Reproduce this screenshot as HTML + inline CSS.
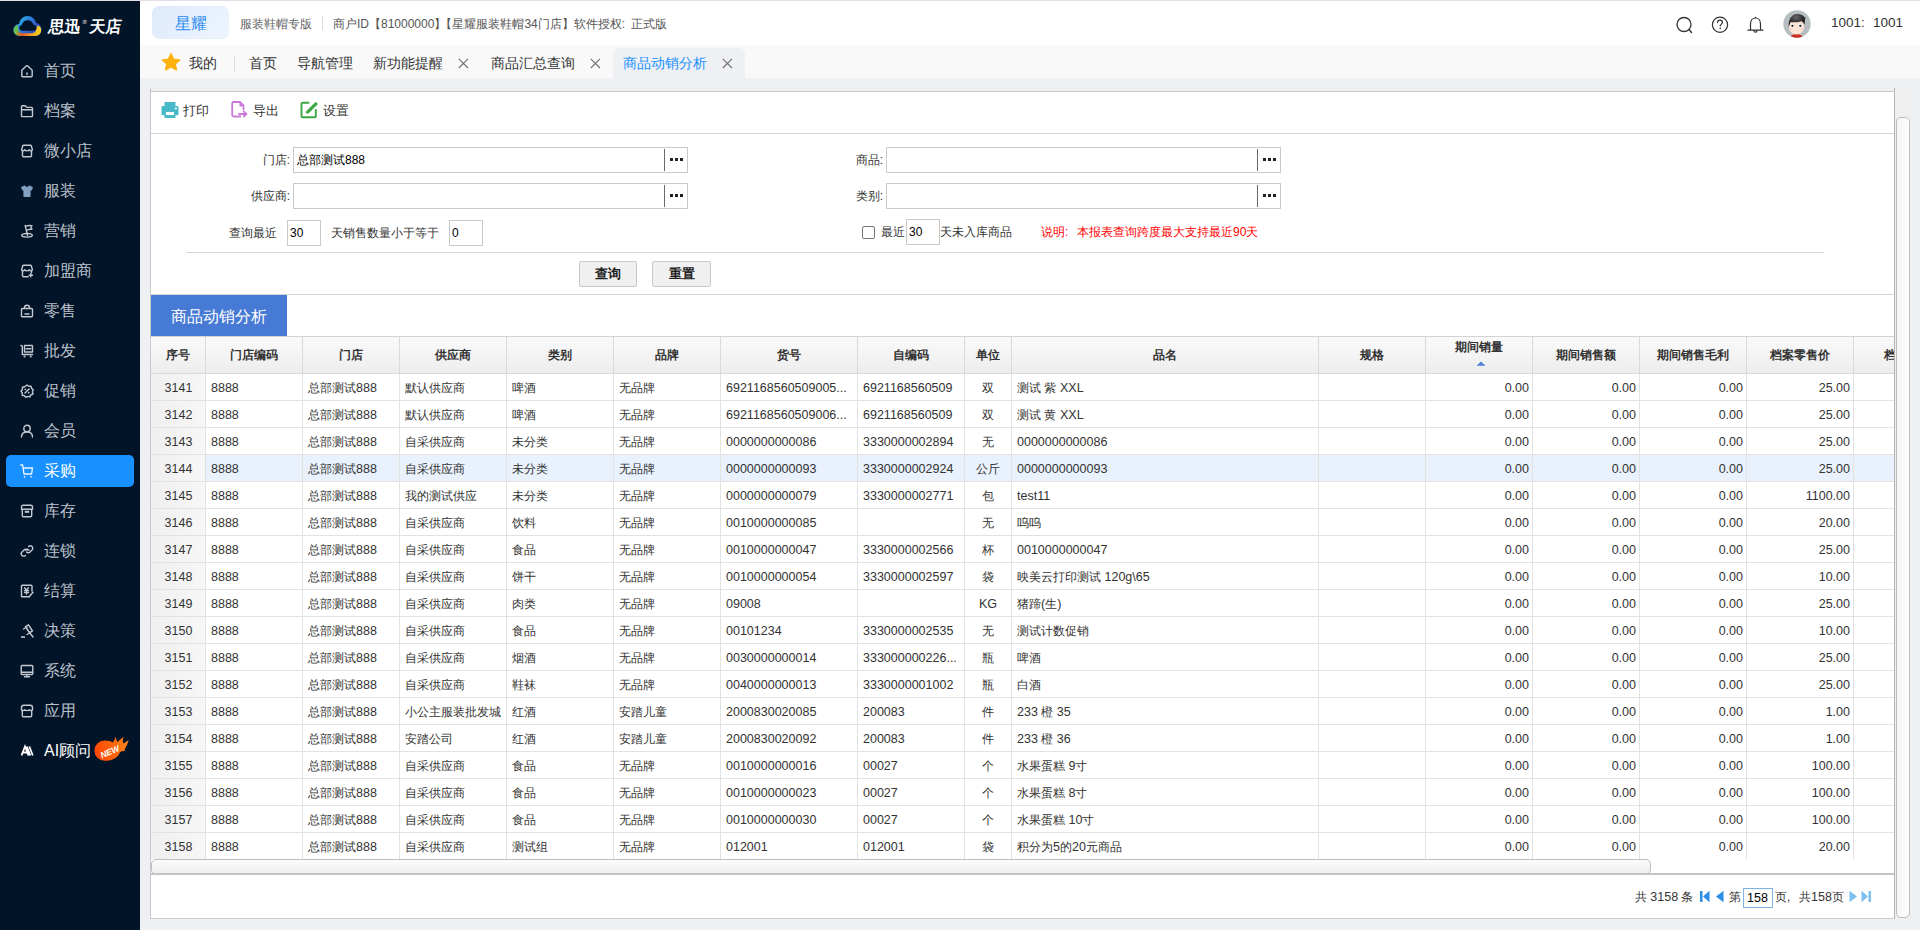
<!DOCTYPE html><html><head><meta charset="utf-8"><style>
*{box-sizing:border-box;margin:0;padding:0}
html,body{width:1920px;height:930px;overflow:hidden;background:#eff0f4;font-family:"Liberation Sans",sans-serif;color:#333;font-size:12px}
.a{position:absolute;white-space:nowrap}
#topline{position:absolute;left:0;top:0;width:1920px;height:1px;background:#e3dde9;z-index:5}
#side{position:absolute;left:0;top:0;width:140px;height:930px;background:#021428}
#hdr{position:absolute;left:140px;top:0;width:1780px;height:45px;background:#fff}
#tabs{position:absolute;left:140px;top:45px;width:1780px;height:33px;background:#f9f9fa}
#panel{position:absolute;left:150px;top:91px;width:1745px;height:828px;background:#fff;border:1px solid #c9c9c9;border-right-color:#b4b4b4}
#vtrack{position:absolute;left:1895px;top:88px;width:15px;height:831px;background:#efefef}
#vthumb{position:absolute;left:1896px;top:117px;width:14px;height:801px;border:1px solid #bdbdbd;border-radius:5px;background:linear-gradient(to right,#f6f6f6,#fdfdfd)}
#ptopstrip{position:absolute;left:150px;top:88px;width:1745px;height:3px;background:#efefef}
.si{position:absolute;left:0;width:140px;height:32px}
.si svg{position:absolute;left:20px;top:9px}
.si span{position:absolute;left:44px;top:5px;font-size:16px;line-height:22px;color:#bcc1cb;font-weight:500}
.si.act{left:6px;width:128px;background:#1890ff;border-radius:5px}
.si.act svg{left:14px}
.si.act span{left:38px;color:#fff}
.tb{position:absolute;top:53px;font-size:14px;line-height:20px;color:#333}
.tx{position:absolute;top:58px}
</style></head><body><div id="topline"></div>
<div id="side">
<svg class="a" style="left:13px;top:15px" width="29" height="22" viewBox="0 0 29 22">
<defs><linearGradient id="lg1" x1="0" y1="0" x2="1" y2="0.6"><stop offset="0" stop-color="#35c0d8"/><stop offset=".4" stop-color="#2a8fe0"/><stop offset=".75" stop-color="#3457c8"/><stop offset="1" stop-color="#3346b8"/></linearGradient>
<linearGradient id="lg2" x1="0" y1="0" x2="1" y2="0"><stop offset="0" stop-color="#6cc84a"/><stop offset=".3" stop-color="#e8572a"/><stop offset=".6" stop-color="#f39a1e"/><stop offset="1" stop-color="#f5d523"/></linearGradient></defs>
<path d="M7 21 C3 21 0.5 18.5 0.5 15 C0.5 11.8 2.8 9.3 6 9 C6.8 4.2 10.5 1 14.5 1 C18.8 1 22 3.8 23 7.8 C26 8.5 28.5 11.2 28.5 14.5 C28.5 18.2 25.8 21 22 21 Z" fill="url(#lg1)"/>
<path d="M0.8 15.5 C0.8 18.6 3.3 20.9 7 20.9 H22 C25.5 20.9 28.2 18.5 28.2 15 C28 12.8 26.8 11.2 25 10.6 C24.5 10.8 24 11.5 23.5 12.5 C23.5 16 21.5 18.2 19 18.2 H9.5 C7 18.2 5.4 16.8 5.2 14.5 L4.5 10.3 C2.2 11 0.8 13 0.8 15.5 Z" fill="url(#lg2)"/>
<path d="M0.8 15.5 C0.8 13 2.2 11 4.5 10.3 L5.4 14.8 C4.5 17 3 19 2.2 19 C1.3 18 0.8 16.8 0.8 15.5 Z" fill="#5fc44c" opacity=".85"/>
<path d="M9.5 15.7 C7.5 15.7 6.3 14.5 6.3 13 C6.3 11.4 7.4 10.3 9 10.1 C9.5 7.2 11.8 5.3 14.6 5.3 C17.6 5.3 19.8 7.3 20.3 9.8 C22.2 10 23.5 11.3 23.5 12.9 C23.5 14.5 22.2 15.7 20.5 15.7 Z" fill="#021428"/>
</svg>
<div class="a" style="left:48px;top:17px;font-size:16px;line-height:19px;color:#fff;font-weight:bold;transform:skewX(-6deg);transform-origin:0 100%">思迅<span style="font-size:6px;vertical-align:top;position:relative;top:-4px;margin:0 3px 0 1px;color:#ccc">®</span>天店</div>
<div class="si" style="top:55px"><svg width="14" height="14" viewBox="0 0 14 14"><path d="M1.8 6.2 L6.2 2 C6.7 1.6 7.3 1.6 7.8 2 L12.2 6.2 V11.8 C12.2 12.4 11.8 12.8 11.2 12.8 H2.8 C2.2 12.8 1.8 12.4 1.8 11.8 Z" fill="none" stroke="#c4c9d1" stroke-width="1.4" stroke-linecap="round" stroke-linejoin="round"/><path d="M7 9 V10.6" fill="none" stroke="#c4c9d1" stroke-width="1.4" stroke-linecap="round" stroke-linejoin="round"/></svg><span>首页</span></div>
<div class="si" style="top:95px"><svg width="14" height="14" viewBox="0 0 14 14"><path d="M1.5 2.5 C1.5 2 1.8 1.7 2.3 1.7 H5.3 L6.8 3.4 H11.7 C12.2 3.4 12.5 3.7 12.5 4.2 V11.8 C12.5 12.3 12.2 12.6 11.7 12.6 H2.3 C1.8 12.6 1.5 12.3 1.5 11.8 Z M1.5 5.8 H12.5" fill="none" stroke="#c4c9d1" stroke-width="1.4" stroke-linecap="round" stroke-linejoin="round"/></svg><span>档案</span></div>
<div class="si" style="top:135px"><svg width="14" height="14" viewBox="0 0 14 14"><path d="M2.5 6.5 V11.8 C2.5 12.4 2.9 12.8 3.5 12.8 H10.5 C11.1 12.8 11.5 12.4 11.5 11.8 V6.5" fill="none" stroke="#c4c9d1" stroke-width="1.4" stroke-linecap="round" stroke-linejoin="round"/><path d="M1.6 5.6 L2.6 2.2 C2.8 1.6 3.2 1.2 3.8 1.2 H10.2 C10.8 1.2 11.2 1.6 11.4 2.2 L12.4 5.6 C12.4 6.4 11.8 6.9 11 6.9 C10.2 6.9 9.7 6.3 9.3 5.8 C8.8 6.4 8 6.9 7 6.9 C6 6.9 5.2 6.4 4.7 5.8 C4.3 6.3 3.8 6.9 3 6.9 C2.2 6.9 1.6 6.4 1.6 5.6 Z" fill="none" stroke="#c4c9d1" stroke-width="1.4" stroke-linecap="round" stroke-linejoin="round"/></svg><span>微小店</span></div>
<div class="si" style="top:175px"><svg width="14" height="14" viewBox="0 0 14 14"><path d="M4.8 1.2 L1 3.2 L2.2 6.6 L3.4 6.2 V12.2 C3.4 12.6 3.7 12.9 4.1 12.9 H9.9 C10.3 12.9 10.6 12.6 10.6 12.2 V6.2 L11.8 6.6 L13 3.2 L9.2 1.2 C8.8 2.3 7.8 2.8 7 2.8 C6.2 2.8 5.2 2.3 4.8 1.2 Z" fill="#809fc1"/></svg><span>服装</span></div>
<div class="si" style="top:215px"><svg width="14" height="14" viewBox="0 0 14 14"><ellipse cx="7" cy="11.3" rx="5.3" ry="1.8" fill="none" stroke="#c4c9d1" stroke-width="1.4" stroke-linecap="round" stroke-linejoin="round"/><path d="M7.5 11.3 L5.2 1.5 C7 2.7 8.5 0.8 12 1.8 C10.5 3 10.8 4.5 12 5 C9 5 7.5 6.6 6.2 5.8" fill="none" stroke="#c4c9d1" stroke-width="1.4" stroke-linecap="round" stroke-linejoin="round"/></svg><span>营销</span></div>
<div class="si" style="top:255px"><svg width="14" height="14" viewBox="0 0 14 14"><path d="M2.5 6.5 V11.8 C2.5 12.4 2.9 12.8 3.5 12.8 H8.2 M11.5 6.5 V8.5" fill="none" stroke="#c4c9d1" stroke-width="1.4" stroke-linecap="round" stroke-linejoin="round"/><path d="M1.6 5.6 L2.6 2.2 C2.8 1.6 3.2 1.2 3.8 1.2 H10.2 C10.8 1.2 11.2 1.6 11.4 2.2 L12.4 5.6 C12.4 6.4 11.8 6.9 11 6.9 C10.2 6.9 9.7 6.3 9.3 5.8 C8.8 6.4 8 6.9 7 6.9 C6 6.9 5.2 6.4 4.7 5.8 C4.3 6.3 3.8 6.9 3 6.9 C2.2 6.9 1.6 6.4 1.6 5.6 Z M10.8 9.5 V12.8 M9.2 11.2 H12.5" fill="none" stroke="#c4c9d1" stroke-width="1.4" stroke-linecap="round" stroke-linejoin="round"/></svg><span>加盟商</span></div>
<div class="si" style="top:295px"><svg width="14" height="14" viewBox="0 0 14 14"><path d="M1.5 5.5 C1.5 4.9 1.9 4.5 2.5 4.5 H11.5 C12.1 4.5 12.5 4.9 12.5 5.5 V11.8 C12.5 12.4 12.1 12.8 11.5 12.8 H2.5 C1.9 12.8 1.5 12.4 1.5 11.8 Z M4.5 4.5 V3.5 C4.5 2 5.5 1.2 7 1.2 C8.5 1.2 9.5 2 9.5 3.5 V4.5 M5 10 H9" fill="none" stroke="#c4c9d1" stroke-width="1.4" stroke-linecap="round" stroke-linejoin="round"/></svg><span>零售</span></div>
<div class="si" style="top:335px"><svg width="14" height="14" viewBox="0 0 14 14"><path d="M1 1.5 C1.8 1.5 2.3 2 2.3 2.8 V10.5 H12.5 M4.5 1.5 H11.8 C12.2 1.5 12.5 1.8 12.5 2.2 V8 H4.5 Z M6.2 4.8 H10.8" fill="none" stroke="#c4c9d1" stroke-width="1.4" stroke-linecap="round" stroke-linejoin="round"/><circle cx="4.5" cy="12.4" r="1" fill="#c4c9d1"/><circle cx="10.8" cy="12.4" r="1" fill="#c4c9d1"/></svg><span>批发</span></div>
<div class="si" style="top:375px"><svg width="14" height="14" viewBox="0 0 14 14"><path d="M7 1 L8.8 2.3 L11 2.2 L11.6 4.4 L13.3 5.8 L12.4 7.8 L13 10 L10.9 10.9 L9.9 12.9 L7.7 12.4 L5.8 13.4 L4.4 11.7 L2.2 11.2 L2.3 9 L1 7.2 L2.4 5.5 L2.4 3.3 L4.6 2.8 Z" fill="none" stroke="#c4c9d1" stroke-width="1.4" stroke-linecap="round" stroke-linejoin="round"/><path d="M5 9 L9 5" fill="none" stroke="#c4c9d1" stroke-width="1.4" stroke-linecap="round" stroke-linejoin="round"/><circle cx="5.3" cy="5.3" r=".9" fill="#c4c9d1"/><circle cx="8.7" cy="8.7" r=".9" fill="#c4c9d1"/></svg><span>促销</span></div>
<div class="si" style="top:415px"><svg width="14" height="14" viewBox="0 0 14 14"><circle cx="7" cy="4.5" r="3.2" fill="none" stroke="#c4c9d1" stroke-width="1.4" stroke-linecap="round" stroke-linejoin="round"/><path d="M1.5 13 C1.5 9.5 4 8 7 8 C10 8 12.5 9.5 12.5 13" fill="none" stroke="#c4c9d1" stroke-width="1.4" stroke-linecap="round" stroke-linejoin="round"/></svg><span>会员</span></div>
<div class="si act" style="top:455px"><svg width="14" height="14" viewBox="0 0 14 14"><path d="M0.8 1 H2.6 L4 10 H11.5 L12.5 4 H3.2 M4.5 12.5 V13 M11 12.5 V13" fill="none" stroke="#e9f3ff" stroke-width="1.4" stroke-linecap="round" stroke-linejoin="round"/></svg><span>采购</span></div>
<div class="si" style="top:495px"><svg width="14" height="14" viewBox="0 0 14 14"><path d="M1.5 3 C1.5 2 2.2 1.3 3.2 1.3 H10.8 C11.8 1.3 12.5 2 12.5 3 V5.3 H1.5 Z M2.3 5.3 V11.8 C2.3 12.4 2.7 12.8 3.3 12.8 H10.7 C11.3 12.8 11.7 12.4 11.7 11.8 V5.3" fill="none" stroke="#c4c9d1" stroke-width="1.4" stroke-linecap="round" stroke-linejoin="round"/><path d="M4.8 7.8 H9.2" stroke="#c4c9d1" stroke-width="2"/></svg><span>库存</span></div>
<div class="si" style="top:535px"><svg width="14" height="14" viewBox="0 0 14 14"><path d="M8.6 2.6 C9.6 1.6 11 1.6 12 2.6 C13 3.6 13 5 12 6 L10 8 C9 9 7.6 9 6.6 8 M5.4 6 C6.4 5 7.8 5 8.8 6 M5.4 11.4 C4.4 12.4 3 12.4 2 11.4 C1 10.4 1 9 2 8 L4 6 C5 5 6.4 5 7.4 6" fill="none" stroke="#c4c9d1" stroke-width="1.4" stroke-linecap="round" stroke-linejoin="round"/></svg><span>连锁</span></div>
<div class="si" style="top:575px"><svg width="14" height="14" viewBox="0 0 14 14"><path d="M9.5 12.7 H2.3 C1.8 12.7 1.5 12.4 1.5 11.9 V2.1 C1.5 1.6 1.8 1.3 2.3 1.3 H11.2 C11.7 1.3 12 1.6 12 2.1 V7 M4.6 3.8 L6.5 6.2 L8.4 3.8 M6.5 6.2 V10 M4.5 6.8 H8.5 M4.5 8.6 H8.5 M13 8.2 L9.2 12.8" fill="none" stroke="#c4c9d1" stroke-width="1.4" stroke-linecap="round" stroke-linejoin="round"/></svg><span>结算</span></div>
<div class="si" style="top:615px"><svg width="14" height="14" viewBox="0 0 14 14"><path d="M5.5 2.5 L8.5 0.8 L12.5 7 L9.5 8.7 Z M7.2 5.5 L13 13" fill="none" stroke="#c4c9d1" stroke-width="1.4" stroke-linecap="round" stroke-linejoin="round"/><path d="M1 13 H5" stroke="#c4c9d1" stroke-width="1.6"/><path d="M3.5 5 L7 3 M7 10.5 L10.5 8.5" fill="none" stroke="#c4c9d1" stroke-width="1.4" stroke-linecap="round" stroke-linejoin="round"/></svg><span>决策</span></div>
<div class="si" style="top:655px"><svg width="14" height="14" viewBox="0 0 14 14"><path d="M1.2 2.5 C1.2 1.9 1.6 1.5 2.2 1.5 H11.8 C12.4 1.5 12.8 1.9 12.8 2.5 V9.5 C12.8 10.1 12.4 10.5 11.8 10.5 H2.2 C1.6 10.5 1.2 10.1 1.2 9.5 Z M1.2 8.3 H12.8 M7 10.5 V12.5 M4.5 12.7 H9.5" fill="none" stroke="#c4c9d1" stroke-width="1.4" stroke-linecap="round" stroke-linejoin="round"/></svg><span>系统</span></div>
<div class="si" style="top:695px"><svg width="14" height="14" viewBox="0 0 14 14"><path d="M2.3 6.5 V11.8 C2.3 12.4 2.7 12.8 3.3 12.8 H10.7 C11.3 12.8 11.7 12.4 11.7 11.8 V6.5" fill="none" stroke="#c4c9d1" stroke-width="1.4" stroke-linecap="round" stroke-linejoin="round"/><path d="M1.5 5.8 V3.5 C1.5 2.2 2.3 1.3 3.8 1.3 H10.2 C11.7 1.3 12.5 2.2 12.5 3.5 V5.8 C11.5 6.9 10.3 6.9 9.3 5.8 C8.3 6.9 5.7 6.9 4.7 5.8 C3.7 6.9 2.5 6.9 1.5 5.8 Z" fill="none" stroke="#c4c9d1" stroke-width="1.4" stroke-linecap="round" stroke-linejoin="round"/></svg><span>应用</span></div>
<div class="si" style="top:735px"><svg width="14" height="14" viewBox="0 0 14 14"><path d="M1.5 11.5 L5 2.5 L8.5 11.5 M3.2 8.5 H6.8 M6.8 2.5 L10.3 11.5 M9.3 2.5 L12.8 11.5" fill="none" stroke="#fff" stroke-width="1.8" stroke-linecap="butt" stroke-linejoin="miter"/></svg><span style="color:#fff">AI顾问</span></div>
<svg class="a" style="left:94px;top:735px" width="36" height="28" viewBox="0 0 36 28">
<defs><linearGradient id="ng" x1="0" y1="0.3" x2="1" y2="0.1"><stop offset="0" stop-color="#ff4a06"/><stop offset=".6" stop-color="#ff6a0c"/><stop offset="1" stop-color="#ff8c1c"/></linearGradient></defs>
<path d="M10.5 5.6 C14.5 5.6 17 6.3 19 7.6 C20 5.8 21 3.5 22 1.8 C22 4 22.3 6 23.8 7 C25.5 5 27.5 3 29.7 2 C28.5 4.5 28.3 7 29.8 8.5 C31.5 7.5 33 6 34.8 5 C33.5 8 32.8 11 31.3 13 C30.5 14.3 30.8 15.5 31 16.3 C29 15.8 27.5 16.3 25.8 17.5 C24 22.5 19 25.8 10.5 25.8 A10.1 10.1 0 0 1 10.5 5.6 Z" fill="url(#ng)"/>
<text x="5.5" y="20" transform="rotate(-24 15 16)" font-family="Liberation Sans" font-weight="bold" font-style="italic" font-size="8.6" fill="#fff">NEW</text>
</svg>
</div>
<div id="hdr"></div>
<div class="a" style="left:152px;top:6px;width:77px;height:32px;border-radius:7px;background:linear-gradient(135deg,#dde9fb,#eef5ff);box-shadow:0 1px 1px rgba(150,180,230,.25)"></div>
<div class="a" style="left:175px;top:14px;font-size:16px;line-height:20px;color:#2d8cf0">星耀</div>
<div class="a" style="left:240px;top:16px;font-size:12px;line-height:17px;color:#666">服装鞋帽专版</div>
<div class="a" style="left:322px;top:16px;width:1px;height:14px;background:#ddd"></div>
<div class="a" style="left:333px;top:16px;font-size:12px;line-height:17px;color:#555">商户ID【81000000】<span style="margin-left:-6px">【</span>星耀服装鞋帽34门店】软件授权<span style="display:inline-block;width:9px">:</span>正式版</div>
<svg class="a" style="left:1674px;top:14px" width="22" height="22" viewBox="0 0 22 22">
<circle cx="10" cy="10.5" r="7" fill="none" stroke="#333" stroke-width="1.3"/><path d="M15 15.5 L17.5 18.5" stroke="#333" stroke-width="1.4" stroke-linecap="round"/></svg>
<svg class="a" style="left:1710px;top:14px" width="22" height="22" viewBox="0 0 22 22">
<circle cx="10" cy="10.8" r="7.6" fill="none" stroke="#333" stroke-width="1.2"/><path d="M7.6 8.6 C7.6 7 8.7 6.2 10 6.2 C11.4 6.2 12.4 7.1 12.4 8.4 C12.4 10 10.2 10.2 10.2 12" fill="none" stroke="#333" stroke-width="1.2" stroke-linecap="round"/><circle cx="10.2" cy="14.4" r=".8" fill="#333"/></svg>
<svg class="a" style="left:1745px;top:14px" width="22" height="22" viewBox="0 0 22 22">
<path d="M5.5 16 V10 C5.5 6.5 7.5 4 10.5 4 C13.5 4 15.5 6.5 15.5 10 V16 M3 16.2 H18 M9 17 C9 18.5 12 18.5 12 17" fill="none" stroke="#333" stroke-width="1.2" stroke-linecap="round"/><path d="M10.5 2.8 V4" stroke="#333" stroke-width="1.2"/></svg>
<svg class="a" style="left:1783px;top:10px" width="28" height="28" viewBox="0 0 28 28">
<defs><clipPath id="avc"><circle cx="14" cy="14" r="13.7"/></clipPath><radialGradient id="hair" cx=".45" cy=".25" r=".6"><stop offset="0" stop-color="#666"/><stop offset="1" stop-color="#151515"/></radialGradient></defs>
<g clip-path="url(#avc)"><rect width="28" height="28" fill="#b6bec1"/>
<path d="M7 28 C8 25 10.5 24 13.5 24 C16.5 24 19 25 20 28 Z" fill="#d02a22"/>
<ellipse cx="13.5" cy="17.3" rx="7.6" ry="7.2" fill="#fbe4d6"/>
<path d="M5.8 17.5 C5 9.5 8.5 4 14 4 C18 4 20.5 5.5 21.5 7.5 L22.5 7 C22 9 21.8 11 21.5 14.5 C20.5 12.5 19.5 11.5 18.5 11 C17 12.5 11 12.5 7.5 12 C6.8 13.5 6.2 15.5 5.8 17.5 Z" fill="url(#hair)"/>
<circle cx="9.3" cy="15.8" r="1.7" fill="#fff"/><circle cx="17.4" cy="15.8" r="1.7" fill="#fff"/>
<circle cx="9.4" cy="15.8" r="1.15" fill="#1a1a1a"/><circle cx="17.3" cy="15.8" r="1.15" fill="#1a1a1a"/>
<ellipse cx="7.8" cy="19" rx="1.3" ry=".8" fill="#f6c9c0"/><ellipse cx="19" cy="19" rx="1.3" ry=".8" fill="#f6c9c0"/></g></svg>
<div class="a" style="left:1831px;top:14px;font-size:13.5px;line-height:18px;color:#333">1001<span style="display:inline-block;width:12px">:</span>1001</div>
<div id="tabs"></div>
<svg class="a" style="left:161px;top:53px" width="20" height="19" viewBox="0 0 20 19"><path d="M10 0.8 L12.6 6.2 L18.6 6.9 L14.2 11 L15.4 16.9 L10 14 L4.6 16.9 L5.8 11 L1.4 6.9 L7.4 6.2 Z" fill="#ffb20f" stroke="#ffb20f" stroke-width="1.4" stroke-linejoin="round"/></svg>
<div class="tb" style="left:189px">我的</div>
<div class="a" style="left:234px;top:56px;width:1px;height:16px;background:#ddd"></div>
<div class="tb" style="left:249px">首页</div>
<div class="tb" style="left:297px">导航管理</div>
<div class="tb" style="left:373px">新功能提醒</div>
<div class="tx" style="left:458px"><svg width="11" height="11" viewBox="0 0 11 11"><path d="M0.8 0.8 L10 10 M10 0.8 L0.8 10" stroke="#707070" stroke-width="1.1"/></svg></div>
<div class="tb" style="left:491px">商品汇总查询</div>
<div class="tx" style="left:590px"><svg width="11" height="11" viewBox="0 0 11 11"><path d="M0.8 0.8 L10 10 M10 0.8 L0.8 10" stroke="#707070" stroke-width="1.1"/></svg></div>
<div class="a" style="left:613px;top:48px;width:132px;height:30px;background:#eff0f4;border-radius:6px 6px 0 0"></div>
<div class="tb" style="left:623px;color:#1890ff">商品动销分析</div>
<div class="tx" style="left:722px"><svg width="11" height="11" viewBox="0 0 11 11"><path d="M0.8 0.8 L10 10 M10 0.8 L0.8 10" stroke="#707070" stroke-width="1.1"/></svg></div>
<div id="ptopstrip"></div>
<div id="panel"></div>
<div class="a" style="left:151px;top:133px;width:1743px;height:1px;background:#d4d4d4"></div>
<svg class="a" style="left:161px;top:101px" width="18" height="18" viewBox="0 0 18 18">
<path d="M3.5 1 H14.5 V5 H3.5 Z" fill="#4ab9c9"/><path d="M2 5 H16 C17 5 17.5 5.6 17.5 6.5 V13 C17.5 13.8 17 14.2 16 14.2 H14.5 V17 H3.5 V14.2 H2 C1 14.2 0.5 13.8 0.5 13 V6.5 C0.5 5.6 1 5 2 5 Z" fill="#4ab9c9"/>
<rect x="5" y="11" width="8" height="3" fill="#fff"/><rect x="13.8" y="6.6" width="2" height="1.6" fill="#fff"/></svg>
<div class="a" style="left:183px;top:102px;font-size:13px;line-height:18px;color:#333">打印</div>
<svg class="a" style="left:231px;top:101px" width="18" height="18" viewBox="0 0 18 18">
<path d="M10 15.5 H2.5 C1.8 15.5 1.2 15 1.2 14.3 V2.2 C1.2 1.5 1.8 1 2.5 1 H9 L12.5 4.5 V9" fill="none" stroke="#c97ad9" stroke-width="1.8" stroke-linejoin="round"/>
<path d="M8.5 1 L13 5.5 H8.5 Z" fill="#c97ad9"/><path d="M8 13 H15 M12.8 10.5 L15.5 13 L12.8 15.5" fill="none" stroke="#c97ad9" stroke-width="1.8" stroke-linecap="round" stroke-linejoin="round"/></svg>
<div class="a" style="left:253px;top:102px;font-size:13px;line-height:18px;color:#333">导出</div>
<svg class="a" style="left:300px;top:101px" width="18" height="18" viewBox="0 0 18 18">
<path d="M8.5 1.8 H2.5 C1.9 1.8 1.5 2.2 1.5 2.8 V15.2 C1.5 15.8 1.9 16.2 2.5 16.2 H14.8 C15.4 16.2 15.8 15.8 15.8 15.2 V9" fill="none" stroke="#3aa842" stroke-width="1.9" stroke-linecap="round"/>
<path d="M15.8 2.2 L8 10 L6.5 12 L8.5 10.8 L16.5 3" fill="none" stroke="#3aa842" stroke-width="2.2" stroke-linecap="round"/></svg>
<div class="a" style="left:323px;top:102px;font-size:13px;line-height:18px;color:#333">设置</div>
<div class="a" style="left:140px;top:152px;width:150px;text-align:right;font-size:12px;line-height:17px;color:#333">门店<span style="font-family:Liberation Sans">:</span></div>
<div class="a" style="left:293px;top:147px;width:395px;height:26px;border:1px solid #c9c9c9;background:#fff"></div><div class="a" style="left:664px;top:149px;width:1px;height:22px;background:#6a6a6a"></div><svg class="a" style="left:670px;top:158px" width="14" height="4" viewBox="0 0 14 4"><rect x="0" y="0" width="3" height="3" fill="#222"/><rect x="5" y="0" width="3" height="3" fill="#222"/><rect x="10" y="0" width="3" height="3" fill="#222"/></svg><div class="a" style="left:297px;top:152px;font-size:12px;line-height:17px;color:#000">总部测试888</div>
<div class="a" style="left:140px;top:188px;width:150px;text-align:right;font-size:12px;line-height:17px;color:#333">供应商<span style="font-family:Liberation Sans">:</span></div>
<div class="a" style="left:293px;top:183px;width:395px;height:26px;border:1px solid #c9c9c9;background:#fff"></div><div class="a" style="left:664px;top:185px;width:1px;height:22px;background:#6a6a6a"></div><svg class="a" style="left:670px;top:194px" width="14" height="4" viewBox="0 0 14 4"><rect x="0" y="0" width="3" height="3" fill="#222"/><rect x="5" y="0" width="3" height="3" fill="#222"/><rect x="10" y="0" width="3" height="3" fill="#222"/></svg>
<div class="a" style="left:229px;top:225px;font-size:12px;line-height:17px;color:#333">查询最近</div>
<div class="a" style="left:287px;top:220px;width:34px;height:26px;border:1px solid #c9c9c9;background:#fff"></div><div class="a" style="left:290px;top:225px;font-size:12px;line-height:17px;color:#000">30</div>
<div class="a" style="left:331px;top:225px;font-size:12px;line-height:17px;color:#333">天销售数量小于等于</div>
<div class="a" style="left:449px;top:220px;width:34px;height:26px;border:1px solid #c9c9c9;background:#fff"></div><div class="a" style="left:452px;top:225px;font-size:12px;line-height:17px;color:#000">0</div>
<div class="a" style="left:733px;top:152px;width:150px;text-align:right;font-size:12px;line-height:17px;color:#333">商品<span style="font-family:Liberation Sans">:</span></div>
<div class="a" style="left:886px;top:147px;width:395px;height:26px;border:1px solid #c9c9c9;background:#fff"></div><div class="a" style="left:1257px;top:149px;width:1px;height:22px;background:#6a6a6a"></div><svg class="a" style="left:1263px;top:158px" width="14" height="4" viewBox="0 0 14 4"><rect x="0" y="0" width="3" height="3" fill="#222"/><rect x="5" y="0" width="3" height="3" fill="#222"/><rect x="10" y="0" width="3" height="3" fill="#222"/></svg>
<div class="a" style="left:733px;top:188px;width:150px;text-align:right;font-size:12px;line-height:17px;color:#333">类别<span style="font-family:Liberation Sans">:</span></div>
<div class="a" style="left:886px;top:183px;width:395px;height:26px;border:1px solid #c9c9c9;background:#fff"></div><div class="a" style="left:1257px;top:185px;width:1px;height:22px;background:#6a6a6a"></div><svg class="a" style="left:1263px;top:194px" width="14" height="4" viewBox="0 0 14 4"><rect x="0" y="0" width="3" height="3" fill="#222"/><rect x="5" y="0" width="3" height="3" fill="#222"/><rect x="10" y="0" width="3" height="3" fill="#222"/></svg>
<div class="a" style="left:862px;top:226px;width:13px;height:13px;border:1px solid #767676;border-radius:2px;background:#fff"></div>
<div class="a" style="left:881px;top:224px;font-size:12px;line-height:17px;color:#333">最近</div>
<div class="a" style="left:906px;top:219px;width:34px;height:26px;border:1px solid #c9c9c9;background:#fff"></div><div class="a" style="left:909px;top:224px;font-size:12px;line-height:17px;color:#000">30</div>
<div class="a" style="left:940px;top:224px;font-size:12px;line-height:17px;color:#333">天未入库商品</div>
<div class="a" style="left:1041px;top:224px;font-size:12px;line-height:17px;color:#f00">说明<span style="display:inline-block;width:12px">:</span>本报表查询跨度最大支持最近90天</div>
<div class="a" style="left:186px;top:252px;width:1638px;height:1px;background:#d6d6d6"></div>
<div class="a" style="left:579px;top:261px;width:58px;height:26px;border:1px solid #c8c8c8;border-radius:2px;background:#f0f0f0;text-align:center;font-size:13px;line-height:24px;font-weight:bold;color:#222">查询</div>
<div class="a" style="left:652px;top:261px;width:59px;height:26px;border:1px solid #c8c8c8;border-radius:2px;background:#f0f0f0;text-align:center;font-size:13px;line-height:24px;font-weight:bold;color:#222">重置</div>
<div class="a" style="left:151px;top:294px;width:1743px;height:1px;background:#d6d6d6"></div>
<div class="a" style="left:151px;top:295px;width:136px;height:42px;background:#477ad4"></div>
<div class="a" style="left:171px;top:306px;font-size:16px;line-height:21px;color:#fff">商品动销分析</div>
<div class="a" style="left:151px;top:336px;width:1743px;height:523px;overflow:hidden">
<div class="a" style="left:0;top:0;width:1743px;height:1px;background:#d3d3d3"></div>
<div class="a" style="left:0;top:1px;width:1743px;height:36px;background:linear-gradient(#fafafa,#ededed)"></div>
<div class="a" style="left:0;top:37px;width:1743px;height:1px;background:#d8d8d8"></div>
<div class="a" style="left:54px;top:119px;width:1743px;height:26px;background:#e8f1fc"></div>
<div class="a" style="left:0;top:38px;width:54px;height:486px;background:linear-gradient(to right,#efefef,#f7f7f7)"></div>
<div class="a" style="left:0;top:64px;width:1743px;height:1px;background:#e2e2e2"></div>
<div class="a" style="left:0;top:91px;width:1743px;height:1px;background:#e2e2e2"></div>
<div class="a" style="left:0;top:118px;width:1743px;height:1px;background:#e2e2e2"></div>
<div class="a" style="left:0;top:145px;width:1743px;height:1px;background:#e2e2e2"></div>
<div class="a" style="left:0;top:172px;width:1743px;height:1px;background:#e2e2e2"></div>
<div class="a" style="left:0;top:199px;width:1743px;height:1px;background:#e2e2e2"></div>
<div class="a" style="left:0;top:226px;width:1743px;height:1px;background:#e2e2e2"></div>
<div class="a" style="left:0;top:253px;width:1743px;height:1px;background:#e2e2e2"></div>
<div class="a" style="left:0;top:280px;width:1743px;height:1px;background:#e2e2e2"></div>
<div class="a" style="left:0;top:307px;width:1743px;height:1px;background:#e2e2e2"></div>
<div class="a" style="left:0;top:334px;width:1743px;height:1px;background:#e2e2e2"></div>
<div class="a" style="left:0;top:361px;width:1743px;height:1px;background:#e2e2e2"></div>
<div class="a" style="left:0;top:388px;width:1743px;height:1px;background:#e2e2e2"></div>
<div class="a" style="left:0;top:415px;width:1743px;height:1px;background:#e2e2e2"></div>
<div class="a" style="left:0;top:442px;width:1743px;height:1px;background:#e2e2e2"></div>
<div class="a" style="left:0;top:469px;width:1743px;height:1px;background:#e2e2e2"></div>
<div class="a" style="left:0;top:496px;width:1743px;height:1px;background:#e2e2e2"></div>
<div class="a" style="left:0;top:523px;width:1743px;height:1px;background:#e2e2e2"></div>
<div class="a" style="left:54px;top:1px;width:1px;height:36px;background:#dadada"></div>
<div class="a" style="left:54px;top:38px;width:1px;height:486px;background:#e2e2e2"></div>
<div class="a" style="left:151px;top:1px;width:1px;height:36px;background:#dadada"></div>
<div class="a" style="left:151px;top:38px;width:1px;height:486px;background:#e2e2e2"></div>
<div class="a" style="left:248px;top:1px;width:1px;height:36px;background:#dadada"></div>
<div class="a" style="left:248px;top:38px;width:1px;height:486px;background:#e2e2e2"></div>
<div class="a" style="left:355px;top:1px;width:1px;height:36px;background:#dadada"></div>
<div class="a" style="left:355px;top:38px;width:1px;height:486px;background:#e2e2e2"></div>
<div class="a" style="left:462px;top:1px;width:1px;height:36px;background:#dadada"></div>
<div class="a" style="left:462px;top:38px;width:1px;height:486px;background:#e2e2e2"></div>
<div class="a" style="left:569px;top:1px;width:1px;height:36px;background:#dadada"></div>
<div class="a" style="left:569px;top:38px;width:1px;height:486px;background:#e2e2e2"></div>
<div class="a" style="left:706px;top:1px;width:1px;height:36px;background:#dadada"></div>
<div class="a" style="left:706px;top:38px;width:1px;height:486px;background:#e2e2e2"></div>
<div class="a" style="left:813px;top:1px;width:1px;height:36px;background:#dadada"></div>
<div class="a" style="left:813px;top:38px;width:1px;height:486px;background:#e2e2e2"></div>
<div class="a" style="left:860px;top:1px;width:1px;height:36px;background:#dadada"></div>
<div class="a" style="left:860px;top:38px;width:1px;height:486px;background:#e2e2e2"></div>
<div class="a" style="left:1167px;top:1px;width:1px;height:36px;background:#dadada"></div>
<div class="a" style="left:1167px;top:38px;width:1px;height:486px;background:#e2e2e2"></div>
<div class="a" style="left:1274px;top:1px;width:1px;height:36px;background:#dadada"></div>
<div class="a" style="left:1274px;top:38px;width:1px;height:486px;background:#e2e2e2"></div>
<div class="a" style="left:1381px;top:1px;width:1px;height:36px;background:#dadada"></div>
<div class="a" style="left:1381px;top:38px;width:1px;height:486px;background:#e2e2e2"></div>
<div class="a" style="left:1488px;top:1px;width:1px;height:36px;background:#dadada"></div>
<div class="a" style="left:1488px;top:38px;width:1px;height:486px;background:#e2e2e2"></div>
<div class="a" style="left:1595px;top:1px;width:1px;height:36px;background:#dadada"></div>
<div class="a" style="left:1595px;top:38px;width:1px;height:486px;background:#e2e2e2"></div>
<div class="a" style="left:1702px;top:1px;width:1px;height:36px;background:#dadada"></div>
<div class="a" style="left:1702px;top:38px;width:1px;height:486px;background:#e2e2e2"></div>
<div class="a" style="left:0px;top:11px;width:54px;text-align:center;font-size:12px;line-height:17px;font-weight:bold;color:#333">序号</div>
<div class="a" style="left:55px;top:11px;width:96px;text-align:center;font-size:12px;line-height:17px;font-weight:bold;color:#333">门店编码</div>
<div class="a" style="left:152px;top:11px;width:96px;text-align:center;font-size:12px;line-height:17px;font-weight:bold;color:#333">门店</div>
<div class="a" style="left:249px;top:11px;width:106px;text-align:center;font-size:12px;line-height:17px;font-weight:bold;color:#333">供应商</div>
<div class="a" style="left:356px;top:11px;width:106px;text-align:center;font-size:12px;line-height:17px;font-weight:bold;color:#333">类别</div>
<div class="a" style="left:463px;top:11px;width:106px;text-align:center;font-size:12px;line-height:17px;font-weight:bold;color:#333">品牌</div>
<div class="a" style="left:570px;top:11px;width:136px;text-align:center;font-size:12px;line-height:17px;font-weight:bold;color:#333">货号</div>
<div class="a" style="left:707px;top:11px;width:106px;text-align:center;font-size:12px;line-height:17px;font-weight:bold;color:#333">自编码</div>
<div class="a" style="left:814px;top:11px;width:46px;text-align:center;font-size:12px;line-height:17px;font-weight:bold;color:#333">单位</div>
<div class="a" style="left:861px;top:11px;width:306px;text-align:center;font-size:12px;line-height:17px;font-weight:bold;color:#333">品名</div>
<div class="a" style="left:1168px;top:11px;width:106px;text-align:center;font-size:12px;line-height:17px;font-weight:bold;color:#333">规格</div>
<div class="a" style="left:1275px;top:3px;width:106px;text-align:center;font-size:12px;line-height:17px;font-weight:bold;color:#333">期间销量</div>
<svg class="a" style="left:1325px;top:25px" width="10" height="5" viewBox="0 0 10 5"><path d="M0.5 4.8 L5 0.5 L9.5 4.8 Z" fill="#4a7fd4"/></svg>
<div class="a" style="left:1382px;top:11px;width:106px;text-align:center;font-size:12px;line-height:17px;font-weight:bold;color:#333">期间销售额</div>
<div class="a" style="left:1489px;top:11px;width:106px;text-align:center;font-size:12px;line-height:17px;font-weight:bold;color:#333">期间销售毛利</div>
<div class="a" style="left:1596px;top:11px;width:106px;text-align:center;font-size:12px;line-height:17px;font-weight:bold;color:#333">档案零售价</div>
<div class="a" style="left:1703px;top:11px;width:120px;text-align:center;font-size:12px;line-height:17px;font-weight:bold;color:#333">档案进货价</div>
<div class="a" style="left:1px;width:53px;text-align:center;top:43px;font-size:12px;line-height:18px;color:#333"><span style="font-size:12.5px">3141</span></div>
<div class="a" style="left:60px;top:43px;font-size:12px;line-height:18px;color:#333"><span style="font-size:12.5px">8888</span></div>
<div class="a" style="left:157px;top:43px;font-size:12px;line-height:18px;color:#333">总部测试<span style="font-size:12.5px">888</span></div>
<div class="a" style="left:254px;top:43px;font-size:12px;line-height:18px;color:#333">默认供应商</div>
<div class="a" style="left:361px;top:43px;font-size:12px;line-height:18px;color:#333">啤酒</div>
<div class="a" style="left:468px;top:43px;font-size:12px;line-height:18px;color:#333">无品牌</div>
<div class="a" style="left:575px;top:43px;font-size:12px;line-height:18px;color:#333"><span style="font-size:12.5px">6921168560509005...</span></div>
<div class="a" style="left:712px;top:43px;font-size:12px;line-height:18px;color:#333"><span style="font-size:12.5px">6921168560509</span></div>
<div class="a" style="left:814px;width:46px;text-align:center;top:43px;font-size:12px;line-height:18px;color:#333">双</div>
<div class="a" style="left:866px;top:43px;font-size:12px;line-height:18px;color:#333">测试<span style="font-size:12.5px"> </span>紫<span style="font-size:12.5px"> XXL</span></div>
<div class="a" style="left:1275px;width:103px;text-align:right;top:43px;font-size:12px;line-height:18px;color:#333"><span style="font-size:12.5px">0.00</span></div>
<div class="a" style="left:1382px;width:103px;text-align:right;top:43px;font-size:12px;line-height:18px;color:#333"><span style="font-size:12.5px">0.00</span></div>
<div class="a" style="left:1489px;width:103px;text-align:right;top:43px;font-size:12px;line-height:18px;color:#333"><span style="font-size:12.5px">0.00</span></div>
<div class="a" style="left:1596px;width:103px;text-align:right;top:43px;font-size:12px;line-height:18px;color:#333"><span style="font-size:12.5px">25.00</span></div>
<div class="a" style="left:1px;width:53px;text-align:center;top:70px;font-size:12px;line-height:18px;color:#333"><span style="font-size:12.5px">3142</span></div>
<div class="a" style="left:60px;top:70px;font-size:12px;line-height:18px;color:#333"><span style="font-size:12.5px">8888</span></div>
<div class="a" style="left:157px;top:70px;font-size:12px;line-height:18px;color:#333">总部测试<span style="font-size:12.5px">888</span></div>
<div class="a" style="left:254px;top:70px;font-size:12px;line-height:18px;color:#333">默认供应商</div>
<div class="a" style="left:361px;top:70px;font-size:12px;line-height:18px;color:#333">啤酒</div>
<div class="a" style="left:468px;top:70px;font-size:12px;line-height:18px;color:#333">无品牌</div>
<div class="a" style="left:575px;top:70px;font-size:12px;line-height:18px;color:#333"><span style="font-size:12.5px">6921168560509006...</span></div>
<div class="a" style="left:712px;top:70px;font-size:12px;line-height:18px;color:#333"><span style="font-size:12.5px">6921168560509</span></div>
<div class="a" style="left:814px;width:46px;text-align:center;top:70px;font-size:12px;line-height:18px;color:#333">双</div>
<div class="a" style="left:866px;top:70px;font-size:12px;line-height:18px;color:#333">测试<span style="font-size:12.5px"> </span>黄<span style="font-size:12.5px"> XXL</span></div>
<div class="a" style="left:1275px;width:103px;text-align:right;top:70px;font-size:12px;line-height:18px;color:#333"><span style="font-size:12.5px">0.00</span></div>
<div class="a" style="left:1382px;width:103px;text-align:right;top:70px;font-size:12px;line-height:18px;color:#333"><span style="font-size:12.5px">0.00</span></div>
<div class="a" style="left:1489px;width:103px;text-align:right;top:70px;font-size:12px;line-height:18px;color:#333"><span style="font-size:12.5px">0.00</span></div>
<div class="a" style="left:1596px;width:103px;text-align:right;top:70px;font-size:12px;line-height:18px;color:#333"><span style="font-size:12.5px">25.00</span></div>
<div class="a" style="left:1px;width:53px;text-align:center;top:97px;font-size:12px;line-height:18px;color:#333"><span style="font-size:12.5px">3143</span></div>
<div class="a" style="left:60px;top:97px;font-size:12px;line-height:18px;color:#333"><span style="font-size:12.5px">8888</span></div>
<div class="a" style="left:157px;top:97px;font-size:12px;line-height:18px;color:#333">总部测试<span style="font-size:12.5px">888</span></div>
<div class="a" style="left:254px;top:97px;font-size:12px;line-height:18px;color:#333">自采供应商</div>
<div class="a" style="left:361px;top:97px;font-size:12px;line-height:18px;color:#333">未分类</div>
<div class="a" style="left:468px;top:97px;font-size:12px;line-height:18px;color:#333">无品牌</div>
<div class="a" style="left:575px;top:97px;font-size:12px;line-height:18px;color:#333"><span style="font-size:12.5px">0000000000086</span></div>
<div class="a" style="left:712px;top:97px;font-size:12px;line-height:18px;color:#333"><span style="font-size:12.5px">3330000002894</span></div>
<div class="a" style="left:814px;width:46px;text-align:center;top:97px;font-size:12px;line-height:18px;color:#333">无</div>
<div class="a" style="left:866px;top:97px;font-size:12px;line-height:18px;color:#333"><span style="font-size:12.5px">0000000000086</span></div>
<div class="a" style="left:1275px;width:103px;text-align:right;top:97px;font-size:12px;line-height:18px;color:#333"><span style="font-size:12.5px">0.00</span></div>
<div class="a" style="left:1382px;width:103px;text-align:right;top:97px;font-size:12px;line-height:18px;color:#333"><span style="font-size:12.5px">0.00</span></div>
<div class="a" style="left:1489px;width:103px;text-align:right;top:97px;font-size:12px;line-height:18px;color:#333"><span style="font-size:12.5px">0.00</span></div>
<div class="a" style="left:1596px;width:103px;text-align:right;top:97px;font-size:12px;line-height:18px;color:#333"><span style="font-size:12.5px">25.00</span></div>
<div class="a" style="left:1px;width:53px;text-align:center;top:124px;font-size:12px;line-height:18px;color:#333"><span style="font-size:12.5px">3144</span></div>
<div class="a" style="left:60px;top:124px;font-size:12px;line-height:18px;color:#333"><span style="font-size:12.5px">8888</span></div>
<div class="a" style="left:157px;top:124px;font-size:12px;line-height:18px;color:#333">总部测试<span style="font-size:12.5px">888</span></div>
<div class="a" style="left:254px;top:124px;font-size:12px;line-height:18px;color:#333">自采供应商</div>
<div class="a" style="left:361px;top:124px;font-size:12px;line-height:18px;color:#333">未分类</div>
<div class="a" style="left:468px;top:124px;font-size:12px;line-height:18px;color:#333">无品牌</div>
<div class="a" style="left:575px;top:124px;font-size:12px;line-height:18px;color:#333"><span style="font-size:12.5px">0000000000093</span></div>
<div class="a" style="left:712px;top:124px;font-size:12px;line-height:18px;color:#333"><span style="font-size:12.5px">3330000002924</span></div>
<div class="a" style="left:814px;width:46px;text-align:center;top:124px;font-size:12px;line-height:18px;color:#333">公斤</div>
<div class="a" style="left:866px;top:124px;font-size:12px;line-height:18px;color:#333"><span style="font-size:12.5px">0000000000093</span></div>
<div class="a" style="left:1275px;width:103px;text-align:right;top:124px;font-size:12px;line-height:18px;color:#333"><span style="font-size:12.5px">0.00</span></div>
<div class="a" style="left:1382px;width:103px;text-align:right;top:124px;font-size:12px;line-height:18px;color:#333"><span style="font-size:12.5px">0.00</span></div>
<div class="a" style="left:1489px;width:103px;text-align:right;top:124px;font-size:12px;line-height:18px;color:#333"><span style="font-size:12.5px">0.00</span></div>
<div class="a" style="left:1596px;width:103px;text-align:right;top:124px;font-size:12px;line-height:18px;color:#333"><span style="font-size:12.5px">25.00</span></div>
<div class="a" style="left:1px;width:53px;text-align:center;top:151px;font-size:12px;line-height:18px;color:#333"><span style="font-size:12.5px">3145</span></div>
<div class="a" style="left:60px;top:151px;font-size:12px;line-height:18px;color:#333"><span style="font-size:12.5px">8888</span></div>
<div class="a" style="left:157px;top:151px;font-size:12px;line-height:18px;color:#333">总部测试<span style="font-size:12.5px">888</span></div>
<div class="a" style="left:254px;top:151px;font-size:12px;line-height:18px;color:#333">我的测试供应</div>
<div class="a" style="left:361px;top:151px;font-size:12px;line-height:18px;color:#333">未分类</div>
<div class="a" style="left:468px;top:151px;font-size:12px;line-height:18px;color:#333">无品牌</div>
<div class="a" style="left:575px;top:151px;font-size:12px;line-height:18px;color:#333"><span style="font-size:12.5px">0000000000079</span></div>
<div class="a" style="left:712px;top:151px;font-size:12px;line-height:18px;color:#333"><span style="font-size:12.5px">3330000002771</span></div>
<div class="a" style="left:814px;width:46px;text-align:center;top:151px;font-size:12px;line-height:18px;color:#333">包</div>
<div class="a" style="left:866px;top:151px;font-size:12px;line-height:18px;color:#333"><span style="font-size:12.5px">test11</span></div>
<div class="a" style="left:1275px;width:103px;text-align:right;top:151px;font-size:12px;line-height:18px;color:#333"><span style="font-size:12.5px">0.00</span></div>
<div class="a" style="left:1382px;width:103px;text-align:right;top:151px;font-size:12px;line-height:18px;color:#333"><span style="font-size:12.5px">0.00</span></div>
<div class="a" style="left:1489px;width:103px;text-align:right;top:151px;font-size:12px;line-height:18px;color:#333"><span style="font-size:12.5px">0.00</span></div>
<div class="a" style="left:1596px;width:103px;text-align:right;top:151px;font-size:12px;line-height:18px;color:#333"><span style="font-size:12.5px">1100.00</span></div>
<div class="a" style="left:1px;width:53px;text-align:center;top:178px;font-size:12px;line-height:18px;color:#333"><span style="font-size:12.5px">3146</span></div>
<div class="a" style="left:60px;top:178px;font-size:12px;line-height:18px;color:#333"><span style="font-size:12.5px">8888</span></div>
<div class="a" style="left:157px;top:178px;font-size:12px;line-height:18px;color:#333">总部测试<span style="font-size:12.5px">888</span></div>
<div class="a" style="left:254px;top:178px;font-size:12px;line-height:18px;color:#333">自采供应商</div>
<div class="a" style="left:361px;top:178px;font-size:12px;line-height:18px;color:#333">饮料</div>
<div class="a" style="left:468px;top:178px;font-size:12px;line-height:18px;color:#333">无品牌</div>
<div class="a" style="left:575px;top:178px;font-size:12px;line-height:18px;color:#333"><span style="font-size:12.5px">0010000000085</span></div>
<div class="a" style="left:814px;width:46px;text-align:center;top:178px;font-size:12px;line-height:18px;color:#333">无</div>
<div class="a" style="left:866px;top:178px;font-size:12px;line-height:18px;color:#333">呜呜</div>
<div class="a" style="left:1275px;width:103px;text-align:right;top:178px;font-size:12px;line-height:18px;color:#333"><span style="font-size:12.5px">0.00</span></div>
<div class="a" style="left:1382px;width:103px;text-align:right;top:178px;font-size:12px;line-height:18px;color:#333"><span style="font-size:12.5px">0.00</span></div>
<div class="a" style="left:1489px;width:103px;text-align:right;top:178px;font-size:12px;line-height:18px;color:#333"><span style="font-size:12.5px">0.00</span></div>
<div class="a" style="left:1596px;width:103px;text-align:right;top:178px;font-size:12px;line-height:18px;color:#333"><span style="font-size:12.5px">20.00</span></div>
<div class="a" style="left:1px;width:53px;text-align:center;top:205px;font-size:12px;line-height:18px;color:#333"><span style="font-size:12.5px">3147</span></div>
<div class="a" style="left:60px;top:205px;font-size:12px;line-height:18px;color:#333"><span style="font-size:12.5px">8888</span></div>
<div class="a" style="left:157px;top:205px;font-size:12px;line-height:18px;color:#333">总部测试<span style="font-size:12.5px">888</span></div>
<div class="a" style="left:254px;top:205px;font-size:12px;line-height:18px;color:#333">自采供应商</div>
<div class="a" style="left:361px;top:205px;font-size:12px;line-height:18px;color:#333">食品</div>
<div class="a" style="left:468px;top:205px;font-size:12px;line-height:18px;color:#333">无品牌</div>
<div class="a" style="left:575px;top:205px;font-size:12px;line-height:18px;color:#333"><span style="font-size:12.5px">0010000000047</span></div>
<div class="a" style="left:712px;top:205px;font-size:12px;line-height:18px;color:#333"><span style="font-size:12.5px">3330000002566</span></div>
<div class="a" style="left:814px;width:46px;text-align:center;top:205px;font-size:12px;line-height:18px;color:#333">杯</div>
<div class="a" style="left:866px;top:205px;font-size:12px;line-height:18px;color:#333"><span style="font-size:12.5px">0010000000047</span></div>
<div class="a" style="left:1275px;width:103px;text-align:right;top:205px;font-size:12px;line-height:18px;color:#333"><span style="font-size:12.5px">0.00</span></div>
<div class="a" style="left:1382px;width:103px;text-align:right;top:205px;font-size:12px;line-height:18px;color:#333"><span style="font-size:12.5px">0.00</span></div>
<div class="a" style="left:1489px;width:103px;text-align:right;top:205px;font-size:12px;line-height:18px;color:#333"><span style="font-size:12.5px">0.00</span></div>
<div class="a" style="left:1596px;width:103px;text-align:right;top:205px;font-size:12px;line-height:18px;color:#333"><span style="font-size:12.5px">25.00</span></div>
<div class="a" style="left:1px;width:53px;text-align:center;top:232px;font-size:12px;line-height:18px;color:#333"><span style="font-size:12.5px">3148</span></div>
<div class="a" style="left:60px;top:232px;font-size:12px;line-height:18px;color:#333"><span style="font-size:12.5px">8888</span></div>
<div class="a" style="left:157px;top:232px;font-size:12px;line-height:18px;color:#333">总部测试<span style="font-size:12.5px">888</span></div>
<div class="a" style="left:254px;top:232px;font-size:12px;line-height:18px;color:#333">自采供应商</div>
<div class="a" style="left:361px;top:232px;font-size:12px;line-height:18px;color:#333">饼干</div>
<div class="a" style="left:468px;top:232px;font-size:12px;line-height:18px;color:#333">无品牌</div>
<div class="a" style="left:575px;top:232px;font-size:12px;line-height:18px;color:#333"><span style="font-size:12.5px">0010000000054</span></div>
<div class="a" style="left:712px;top:232px;font-size:12px;line-height:18px;color:#333"><span style="font-size:12.5px">3330000002597</span></div>
<div class="a" style="left:814px;width:46px;text-align:center;top:232px;font-size:12px;line-height:18px;color:#333">袋</div>
<div class="a" style="left:866px;top:232px;font-size:12px;line-height:18px;color:#333">映美云打印测试<span style="font-size:12.5px"> 120g\65</span></div>
<div class="a" style="left:1275px;width:103px;text-align:right;top:232px;font-size:12px;line-height:18px;color:#333"><span style="font-size:12.5px">0.00</span></div>
<div class="a" style="left:1382px;width:103px;text-align:right;top:232px;font-size:12px;line-height:18px;color:#333"><span style="font-size:12.5px">0.00</span></div>
<div class="a" style="left:1489px;width:103px;text-align:right;top:232px;font-size:12px;line-height:18px;color:#333"><span style="font-size:12.5px">0.00</span></div>
<div class="a" style="left:1596px;width:103px;text-align:right;top:232px;font-size:12px;line-height:18px;color:#333"><span style="font-size:12.5px">10.00</span></div>
<div class="a" style="left:1px;width:53px;text-align:center;top:259px;font-size:12px;line-height:18px;color:#333"><span style="font-size:12.5px">3149</span></div>
<div class="a" style="left:60px;top:259px;font-size:12px;line-height:18px;color:#333"><span style="font-size:12.5px">8888</span></div>
<div class="a" style="left:157px;top:259px;font-size:12px;line-height:18px;color:#333">总部测试<span style="font-size:12.5px">888</span></div>
<div class="a" style="left:254px;top:259px;font-size:12px;line-height:18px;color:#333">自采供应商</div>
<div class="a" style="left:361px;top:259px;font-size:12px;line-height:18px;color:#333">肉类</div>
<div class="a" style="left:468px;top:259px;font-size:12px;line-height:18px;color:#333">无品牌</div>
<div class="a" style="left:575px;top:259px;font-size:12px;line-height:18px;color:#333"><span style="font-size:12.5px">09008</span></div>
<div class="a" style="left:814px;width:46px;text-align:center;top:259px;font-size:12px;line-height:18px;color:#333"><span style="font-size:12.5px">KG</span></div>
<div class="a" style="left:866px;top:259px;font-size:12px;line-height:18px;color:#333">猪蹄<span style="font-size:12.5px">(</span>生<span style="font-size:12.5px">)</span></div>
<div class="a" style="left:1275px;width:103px;text-align:right;top:259px;font-size:12px;line-height:18px;color:#333"><span style="font-size:12.5px">0.00</span></div>
<div class="a" style="left:1382px;width:103px;text-align:right;top:259px;font-size:12px;line-height:18px;color:#333"><span style="font-size:12.5px">0.00</span></div>
<div class="a" style="left:1489px;width:103px;text-align:right;top:259px;font-size:12px;line-height:18px;color:#333"><span style="font-size:12.5px">0.00</span></div>
<div class="a" style="left:1596px;width:103px;text-align:right;top:259px;font-size:12px;line-height:18px;color:#333"><span style="font-size:12.5px">25.00</span></div>
<div class="a" style="left:1px;width:53px;text-align:center;top:286px;font-size:12px;line-height:18px;color:#333"><span style="font-size:12.5px">3150</span></div>
<div class="a" style="left:60px;top:286px;font-size:12px;line-height:18px;color:#333"><span style="font-size:12.5px">8888</span></div>
<div class="a" style="left:157px;top:286px;font-size:12px;line-height:18px;color:#333">总部测试<span style="font-size:12.5px">888</span></div>
<div class="a" style="left:254px;top:286px;font-size:12px;line-height:18px;color:#333">自采供应商</div>
<div class="a" style="left:361px;top:286px;font-size:12px;line-height:18px;color:#333">食品</div>
<div class="a" style="left:468px;top:286px;font-size:12px;line-height:18px;color:#333">无品牌</div>
<div class="a" style="left:575px;top:286px;font-size:12px;line-height:18px;color:#333"><span style="font-size:12.5px">00101234</span></div>
<div class="a" style="left:712px;top:286px;font-size:12px;line-height:18px;color:#333"><span style="font-size:12.5px">3330000002535</span></div>
<div class="a" style="left:814px;width:46px;text-align:center;top:286px;font-size:12px;line-height:18px;color:#333">无</div>
<div class="a" style="left:866px;top:286px;font-size:12px;line-height:18px;color:#333">测试计数促销</div>
<div class="a" style="left:1275px;width:103px;text-align:right;top:286px;font-size:12px;line-height:18px;color:#333"><span style="font-size:12.5px">0.00</span></div>
<div class="a" style="left:1382px;width:103px;text-align:right;top:286px;font-size:12px;line-height:18px;color:#333"><span style="font-size:12.5px">0.00</span></div>
<div class="a" style="left:1489px;width:103px;text-align:right;top:286px;font-size:12px;line-height:18px;color:#333"><span style="font-size:12.5px">0.00</span></div>
<div class="a" style="left:1596px;width:103px;text-align:right;top:286px;font-size:12px;line-height:18px;color:#333"><span style="font-size:12.5px">10.00</span></div>
<div class="a" style="left:1px;width:53px;text-align:center;top:313px;font-size:12px;line-height:18px;color:#333"><span style="font-size:12.5px">3151</span></div>
<div class="a" style="left:60px;top:313px;font-size:12px;line-height:18px;color:#333"><span style="font-size:12.5px">8888</span></div>
<div class="a" style="left:157px;top:313px;font-size:12px;line-height:18px;color:#333">总部测试<span style="font-size:12.5px">888</span></div>
<div class="a" style="left:254px;top:313px;font-size:12px;line-height:18px;color:#333">自采供应商</div>
<div class="a" style="left:361px;top:313px;font-size:12px;line-height:18px;color:#333">烟酒</div>
<div class="a" style="left:468px;top:313px;font-size:12px;line-height:18px;color:#333">无品牌</div>
<div class="a" style="left:575px;top:313px;font-size:12px;line-height:18px;color:#333"><span style="font-size:12.5px">0030000000014</span></div>
<div class="a" style="left:712px;top:313px;font-size:12px;line-height:18px;color:#333"><span style="font-size:12.5px">333000000226...</span></div>
<div class="a" style="left:814px;width:46px;text-align:center;top:313px;font-size:12px;line-height:18px;color:#333">瓶</div>
<div class="a" style="left:866px;top:313px;font-size:12px;line-height:18px;color:#333">啤酒</div>
<div class="a" style="left:1275px;width:103px;text-align:right;top:313px;font-size:12px;line-height:18px;color:#333"><span style="font-size:12.5px">0.00</span></div>
<div class="a" style="left:1382px;width:103px;text-align:right;top:313px;font-size:12px;line-height:18px;color:#333"><span style="font-size:12.5px">0.00</span></div>
<div class="a" style="left:1489px;width:103px;text-align:right;top:313px;font-size:12px;line-height:18px;color:#333"><span style="font-size:12.5px">0.00</span></div>
<div class="a" style="left:1596px;width:103px;text-align:right;top:313px;font-size:12px;line-height:18px;color:#333"><span style="font-size:12.5px">25.00</span></div>
<div class="a" style="left:1px;width:53px;text-align:center;top:340px;font-size:12px;line-height:18px;color:#333"><span style="font-size:12.5px">3152</span></div>
<div class="a" style="left:60px;top:340px;font-size:12px;line-height:18px;color:#333"><span style="font-size:12.5px">8888</span></div>
<div class="a" style="left:157px;top:340px;font-size:12px;line-height:18px;color:#333">总部测试<span style="font-size:12.5px">888</span></div>
<div class="a" style="left:254px;top:340px;font-size:12px;line-height:18px;color:#333">自采供应商</div>
<div class="a" style="left:361px;top:340px;font-size:12px;line-height:18px;color:#333">鞋袜</div>
<div class="a" style="left:468px;top:340px;font-size:12px;line-height:18px;color:#333">无品牌</div>
<div class="a" style="left:575px;top:340px;font-size:12px;line-height:18px;color:#333"><span style="font-size:12.5px">0040000000013</span></div>
<div class="a" style="left:712px;top:340px;font-size:12px;line-height:18px;color:#333"><span style="font-size:12.5px">3330000001002</span></div>
<div class="a" style="left:814px;width:46px;text-align:center;top:340px;font-size:12px;line-height:18px;color:#333">瓶</div>
<div class="a" style="left:866px;top:340px;font-size:12px;line-height:18px;color:#333">白酒</div>
<div class="a" style="left:1275px;width:103px;text-align:right;top:340px;font-size:12px;line-height:18px;color:#333"><span style="font-size:12.5px">0.00</span></div>
<div class="a" style="left:1382px;width:103px;text-align:right;top:340px;font-size:12px;line-height:18px;color:#333"><span style="font-size:12.5px">0.00</span></div>
<div class="a" style="left:1489px;width:103px;text-align:right;top:340px;font-size:12px;line-height:18px;color:#333"><span style="font-size:12.5px">0.00</span></div>
<div class="a" style="left:1596px;width:103px;text-align:right;top:340px;font-size:12px;line-height:18px;color:#333"><span style="font-size:12.5px">25.00</span></div>
<div class="a" style="left:1px;width:53px;text-align:center;top:367px;font-size:12px;line-height:18px;color:#333"><span style="font-size:12.5px">3153</span></div>
<div class="a" style="left:60px;top:367px;font-size:12px;line-height:18px;color:#333"><span style="font-size:12.5px">8888</span></div>
<div class="a" style="left:157px;top:367px;font-size:12px;line-height:18px;color:#333">总部测试<span style="font-size:12.5px">888</span></div>
<div class="a" style="left:254px;top:367px;font-size:12px;line-height:18px;color:#333">小公主服装批发城</div>
<div class="a" style="left:361px;top:367px;font-size:12px;line-height:18px;color:#333">红酒</div>
<div class="a" style="left:468px;top:367px;font-size:12px;line-height:18px;color:#333">安踏儿童</div>
<div class="a" style="left:575px;top:367px;font-size:12px;line-height:18px;color:#333"><span style="font-size:12.5px">2000830020085</span></div>
<div class="a" style="left:712px;top:367px;font-size:12px;line-height:18px;color:#333"><span style="font-size:12.5px">200083</span></div>
<div class="a" style="left:814px;width:46px;text-align:center;top:367px;font-size:12px;line-height:18px;color:#333">件</div>
<div class="a" style="left:866px;top:367px;font-size:12px;line-height:18px;color:#333"><span style="font-size:12.5px">233 </span>橙<span style="font-size:12.5px"> 35</span></div>
<div class="a" style="left:1275px;width:103px;text-align:right;top:367px;font-size:12px;line-height:18px;color:#333"><span style="font-size:12.5px">0.00</span></div>
<div class="a" style="left:1382px;width:103px;text-align:right;top:367px;font-size:12px;line-height:18px;color:#333"><span style="font-size:12.5px">0.00</span></div>
<div class="a" style="left:1489px;width:103px;text-align:right;top:367px;font-size:12px;line-height:18px;color:#333"><span style="font-size:12.5px">0.00</span></div>
<div class="a" style="left:1596px;width:103px;text-align:right;top:367px;font-size:12px;line-height:18px;color:#333"><span style="font-size:12.5px">1.00</span></div>
<div class="a" style="left:1px;width:53px;text-align:center;top:394px;font-size:12px;line-height:18px;color:#333"><span style="font-size:12.5px">3154</span></div>
<div class="a" style="left:60px;top:394px;font-size:12px;line-height:18px;color:#333"><span style="font-size:12.5px">8888</span></div>
<div class="a" style="left:157px;top:394px;font-size:12px;line-height:18px;color:#333">总部测试<span style="font-size:12.5px">888</span></div>
<div class="a" style="left:254px;top:394px;font-size:12px;line-height:18px;color:#333">安踏公司</div>
<div class="a" style="left:361px;top:394px;font-size:12px;line-height:18px;color:#333">红酒</div>
<div class="a" style="left:468px;top:394px;font-size:12px;line-height:18px;color:#333">安踏儿童</div>
<div class="a" style="left:575px;top:394px;font-size:12px;line-height:18px;color:#333"><span style="font-size:12.5px">2000830020092</span></div>
<div class="a" style="left:712px;top:394px;font-size:12px;line-height:18px;color:#333"><span style="font-size:12.5px">200083</span></div>
<div class="a" style="left:814px;width:46px;text-align:center;top:394px;font-size:12px;line-height:18px;color:#333">件</div>
<div class="a" style="left:866px;top:394px;font-size:12px;line-height:18px;color:#333"><span style="font-size:12.5px">233 </span>橙<span style="font-size:12.5px"> 36</span></div>
<div class="a" style="left:1275px;width:103px;text-align:right;top:394px;font-size:12px;line-height:18px;color:#333"><span style="font-size:12.5px">0.00</span></div>
<div class="a" style="left:1382px;width:103px;text-align:right;top:394px;font-size:12px;line-height:18px;color:#333"><span style="font-size:12.5px">0.00</span></div>
<div class="a" style="left:1489px;width:103px;text-align:right;top:394px;font-size:12px;line-height:18px;color:#333"><span style="font-size:12.5px">0.00</span></div>
<div class="a" style="left:1596px;width:103px;text-align:right;top:394px;font-size:12px;line-height:18px;color:#333"><span style="font-size:12.5px">1.00</span></div>
<div class="a" style="left:1px;width:53px;text-align:center;top:421px;font-size:12px;line-height:18px;color:#333"><span style="font-size:12.5px">3155</span></div>
<div class="a" style="left:60px;top:421px;font-size:12px;line-height:18px;color:#333"><span style="font-size:12.5px">8888</span></div>
<div class="a" style="left:157px;top:421px;font-size:12px;line-height:18px;color:#333">总部测试<span style="font-size:12.5px">888</span></div>
<div class="a" style="left:254px;top:421px;font-size:12px;line-height:18px;color:#333">自采供应商</div>
<div class="a" style="left:361px;top:421px;font-size:12px;line-height:18px;color:#333">食品</div>
<div class="a" style="left:468px;top:421px;font-size:12px;line-height:18px;color:#333">无品牌</div>
<div class="a" style="left:575px;top:421px;font-size:12px;line-height:18px;color:#333"><span style="font-size:12.5px">0010000000016</span></div>
<div class="a" style="left:712px;top:421px;font-size:12px;line-height:18px;color:#333"><span style="font-size:12.5px">00027</span></div>
<div class="a" style="left:814px;width:46px;text-align:center;top:421px;font-size:12px;line-height:18px;color:#333">个</div>
<div class="a" style="left:866px;top:421px;font-size:12px;line-height:18px;color:#333">水果蛋糕<span style="font-size:12.5px"> 9</span>寸</div>
<div class="a" style="left:1275px;width:103px;text-align:right;top:421px;font-size:12px;line-height:18px;color:#333"><span style="font-size:12.5px">0.00</span></div>
<div class="a" style="left:1382px;width:103px;text-align:right;top:421px;font-size:12px;line-height:18px;color:#333"><span style="font-size:12.5px">0.00</span></div>
<div class="a" style="left:1489px;width:103px;text-align:right;top:421px;font-size:12px;line-height:18px;color:#333"><span style="font-size:12.5px">0.00</span></div>
<div class="a" style="left:1596px;width:103px;text-align:right;top:421px;font-size:12px;line-height:18px;color:#333"><span style="font-size:12.5px">100.00</span></div>
<div class="a" style="left:1px;width:53px;text-align:center;top:448px;font-size:12px;line-height:18px;color:#333"><span style="font-size:12.5px">3156</span></div>
<div class="a" style="left:60px;top:448px;font-size:12px;line-height:18px;color:#333"><span style="font-size:12.5px">8888</span></div>
<div class="a" style="left:157px;top:448px;font-size:12px;line-height:18px;color:#333">总部测试<span style="font-size:12.5px">888</span></div>
<div class="a" style="left:254px;top:448px;font-size:12px;line-height:18px;color:#333">自采供应商</div>
<div class="a" style="left:361px;top:448px;font-size:12px;line-height:18px;color:#333">食品</div>
<div class="a" style="left:468px;top:448px;font-size:12px;line-height:18px;color:#333">无品牌</div>
<div class="a" style="left:575px;top:448px;font-size:12px;line-height:18px;color:#333"><span style="font-size:12.5px">0010000000023</span></div>
<div class="a" style="left:712px;top:448px;font-size:12px;line-height:18px;color:#333"><span style="font-size:12.5px">00027</span></div>
<div class="a" style="left:814px;width:46px;text-align:center;top:448px;font-size:12px;line-height:18px;color:#333">个</div>
<div class="a" style="left:866px;top:448px;font-size:12px;line-height:18px;color:#333">水果蛋糕<span style="font-size:12.5px"> 8</span>寸</div>
<div class="a" style="left:1275px;width:103px;text-align:right;top:448px;font-size:12px;line-height:18px;color:#333"><span style="font-size:12.5px">0.00</span></div>
<div class="a" style="left:1382px;width:103px;text-align:right;top:448px;font-size:12px;line-height:18px;color:#333"><span style="font-size:12.5px">0.00</span></div>
<div class="a" style="left:1489px;width:103px;text-align:right;top:448px;font-size:12px;line-height:18px;color:#333"><span style="font-size:12.5px">0.00</span></div>
<div class="a" style="left:1596px;width:103px;text-align:right;top:448px;font-size:12px;line-height:18px;color:#333"><span style="font-size:12.5px">100.00</span></div>
<div class="a" style="left:1px;width:53px;text-align:center;top:475px;font-size:12px;line-height:18px;color:#333"><span style="font-size:12.5px">3157</span></div>
<div class="a" style="left:60px;top:475px;font-size:12px;line-height:18px;color:#333"><span style="font-size:12.5px">8888</span></div>
<div class="a" style="left:157px;top:475px;font-size:12px;line-height:18px;color:#333">总部测试<span style="font-size:12.5px">888</span></div>
<div class="a" style="left:254px;top:475px;font-size:12px;line-height:18px;color:#333">自采供应商</div>
<div class="a" style="left:361px;top:475px;font-size:12px;line-height:18px;color:#333">食品</div>
<div class="a" style="left:468px;top:475px;font-size:12px;line-height:18px;color:#333">无品牌</div>
<div class="a" style="left:575px;top:475px;font-size:12px;line-height:18px;color:#333"><span style="font-size:12.5px">0010000000030</span></div>
<div class="a" style="left:712px;top:475px;font-size:12px;line-height:18px;color:#333"><span style="font-size:12.5px">00027</span></div>
<div class="a" style="left:814px;width:46px;text-align:center;top:475px;font-size:12px;line-height:18px;color:#333">个</div>
<div class="a" style="left:866px;top:475px;font-size:12px;line-height:18px;color:#333">水果蛋糕<span style="font-size:12.5px"> 10</span>寸</div>
<div class="a" style="left:1275px;width:103px;text-align:right;top:475px;font-size:12px;line-height:18px;color:#333"><span style="font-size:12.5px">0.00</span></div>
<div class="a" style="left:1382px;width:103px;text-align:right;top:475px;font-size:12px;line-height:18px;color:#333"><span style="font-size:12.5px">0.00</span></div>
<div class="a" style="left:1489px;width:103px;text-align:right;top:475px;font-size:12px;line-height:18px;color:#333"><span style="font-size:12.5px">0.00</span></div>
<div class="a" style="left:1596px;width:103px;text-align:right;top:475px;font-size:12px;line-height:18px;color:#333"><span style="font-size:12.5px">100.00</span></div>
<div class="a" style="left:1px;width:53px;text-align:center;top:502px;font-size:12px;line-height:18px;color:#333"><span style="font-size:12.5px">3158</span></div>
<div class="a" style="left:60px;top:502px;font-size:12px;line-height:18px;color:#333"><span style="font-size:12.5px">8888</span></div>
<div class="a" style="left:157px;top:502px;font-size:12px;line-height:18px;color:#333">总部测试<span style="font-size:12.5px">888</span></div>
<div class="a" style="left:254px;top:502px;font-size:12px;line-height:18px;color:#333">自采供应商</div>
<div class="a" style="left:361px;top:502px;font-size:12px;line-height:18px;color:#333">测试组</div>
<div class="a" style="left:468px;top:502px;font-size:12px;line-height:18px;color:#333">无品牌</div>
<div class="a" style="left:575px;top:502px;font-size:12px;line-height:18px;color:#333"><span style="font-size:12.5px">012001</span></div>
<div class="a" style="left:712px;top:502px;font-size:12px;line-height:18px;color:#333"><span style="font-size:12.5px">012001</span></div>
<div class="a" style="left:814px;width:46px;text-align:center;top:502px;font-size:12px;line-height:18px;color:#333">袋</div>
<div class="a" style="left:866px;top:502px;font-size:12px;line-height:18px;color:#333">积分为<span style="font-size:12.5px">5</span>的<span style="font-size:12.5px">20</span>元商品</div>
<div class="a" style="left:1275px;width:103px;text-align:right;top:502px;font-size:12px;line-height:18px;color:#333"><span style="font-size:12.5px">0.00</span></div>
<div class="a" style="left:1382px;width:103px;text-align:right;top:502px;font-size:12px;line-height:18px;color:#333"><span style="font-size:12.5px">0.00</span></div>
<div class="a" style="left:1489px;width:103px;text-align:right;top:502px;font-size:12px;line-height:18px;color:#333"><span style="font-size:12.5px">0.00</span></div>
<div class="a" style="left:1596px;width:103px;text-align:right;top:502px;font-size:12px;line-height:18px;color:#333"><span style="font-size:12.5px">20.00</span></div>
<div class="a" style="left:0;top:523px;width:1743px;height:15px;background:#efefef;border-bottom:2px solid #c4c4c4"></div>
</div>
<div class="a" style="left:151px;top:859px;width:1500px;height:16px;border:1px solid #bdbdbd;border-radius:5px;background:linear-gradient(#fbfbfb,#eeeeee)"></div>
<div class="a" style="left:151px;top:873px;width:1743px;height:2px;background:#c4c4c4"></div>
<div class="a" style="left:1635px;top:889px;font-size:12px;line-height:17px;color:#333">共 <span style="font-size:12.5px">3158</span> 条</div>
<svg class="a" style="left:1700px;top:890px" width="10" height="13" viewBox="0 0 10 13"><rect x="0" y="1" width="2.5" height="11" fill="#2d8ee8"/><path d="M9.5 0.8 V12.2 L3 6.5 Z" fill="#2d8ee8"/></svg>
<svg class="a" style="left:1715px;top:890px" width="9" height="13" viewBox="0 0 9 13"><path d="M8.5 0.8 V12.2 L1 6.5 Z" fill="#2d8ee8"/></svg>
<div class="a" style="left:1729px;top:889px;font-size:12px;line-height:17px;color:#333">第</div>
<div class="a" style="left:1743px;top:888px;width:30px;height:20px;border:1px solid #7fb2e5;background:#fff;font-size:12.5px;line-height:19px;color:#000;padding-left:3px">158</div>
<div class="a" style="left:1775px;top:889px;font-size:12px;line-height:17px;color:#333">页<span style="display:inline-block;width:12px">,</span>共<span style="font-size:12.5px">158</span>页</div>
<svg class="a" style="left:1849px;top:890px" width="9" height="13" viewBox="0 0 9 13"><path d="M0.5 0.8 V12.2 L8 6.5 Z" fill="#7ec0f2"/></svg>
<svg class="a" style="left:1861px;top:890px" width="10" height="13" viewBox="0 0 10 13"><path d="M0.5 0.8 V12.2 L7 6.5 Z" fill="#7ec0f2"/><rect x="7.5" y="1" width="2.5" height="11" fill="#7ec0f2"/></svg>
<div id="vtrack"></div>
<div class="a" style="left:150px;top:88px;width:1px;height:3px;background:#c9c9c9"></div><div class="a" style="left:1894px;top:88px;width:1px;height:3px;background:#b4b4b4"></div>
<div id="vthumb"></div></body></html>
